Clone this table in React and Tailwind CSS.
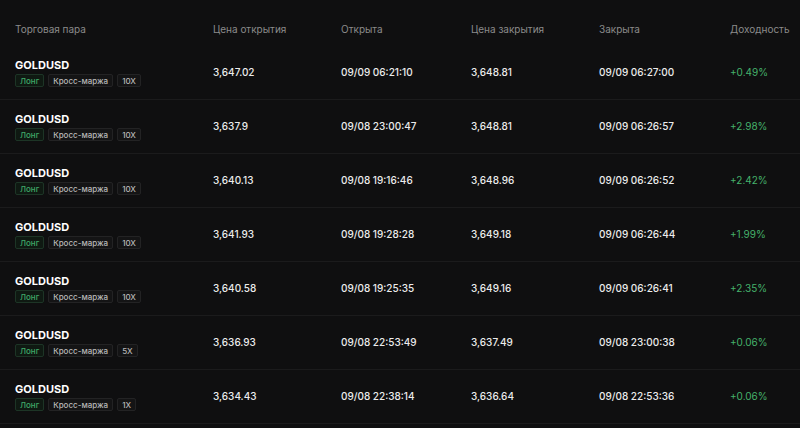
import React from "react";

const rows = [
  { lev: "10X", open: "3,647.02", openedAt: "09/09 06:21:10", close: "3,648.81", closedAt: "09/09 06:27:00", pnl: "+0.49%" },
  { lev: "10X", open: "3,637.9", openedAt: "09/08 23:00:47", close: "3,648.81", closedAt: "09/09 06:26:57", pnl: "+2.98%" },
  { lev: "10X", open: "3,640.13", openedAt: "09/08 19:16:46", close: "3,648.96", closedAt: "09/09 06:26:52", pnl: "+2.42%" },
  { lev: "10X", open: "3,641.93", openedAt: "09/08 19:28:28", close: "3,649.18", closedAt: "09/09 06:26:44", pnl: "+1.99%" },
  { lev: "10X", open: "3,640.58", openedAt: "09/08 19:25:35", close: "3,649.16", closedAt: "09/09 06:26:41", pnl: "+2.35%" },
  { lev: "5X", open: "3,636.93", openedAt: "09/08 22:53:49", close: "3,637.49", closedAt: "09/08 23:00:38", pnl: "+0.06%" },
  { lev: "1X", open: "3,634.43", openedAt: "09/08 22:38:14", close: "3,636.64", closedAt: "09/08 22:53:36", pnl: "+0.06%" },
];

const cols = "grid grid-cols-[198px_128px_130px_128px_131px_1fr] pl-[15px]";

const Tag = ({ children, green }) => (
  <span
    className={
      "inline-flex items-center h-[13px] px-[4px] rounded-[2px] border text-[8px] leading-none " +
      (green
        ? "border-[#1d3526] bg-[#0f1912] text-[#3fa968]"
        : "border-[#232324] bg-[#141415] text-[#b8b8b8]")
    }
  >
    {children}
  </span>
);

export default function App() {
  return (
    <div
      className="w-[800px] h-[428px] overflow-hidden bg-[#0f0f10] text-white"
      style={{ fontFamily: "Inter, 'Noto Sans', sans-serif" }}
    >
      <div className={cols + " h-[46px] items-center pt-[13px] text-[10px] text-[#8b8b8b]"}>
        <div>Торговая пара</div>
        <div>Цена открытия</div>
        <div>Открыта</div>
        <div>Цена закрытия</div>
        <div>Закрыта</div>
        <div>Доходность</div>
      </div>
      {rows.map((r, i) => (
        <div
          key={i}
          className={cols + " h-[54px] items-center border-b border-[#1b1b1c] text-[10px] font-medium text-[#ececec]"}
        >
          <div className="flex flex-col gap-[2px] pt-[1px]">
            <div className="text-[11px] font-bold leading-[13px] text-white">GOLDUSD</div>
            <div className="flex gap-[4px]">
              <Tag green>Лонг</Tag>
              <Tag>Кросс-маржа</Tag>
              <Tag>{r.lev}</Tag>
            </div>
          </div>
          <div>{r.open}</div>
          <div>{r.openedAt}</div>
          <div>{r.close}</div>
          <div>{r.closedAt}</div>
          <div className="font-normal text-[#45b26b]">{r.pnl}</div>
        </div>
      ))}
    </div>
  );
}
